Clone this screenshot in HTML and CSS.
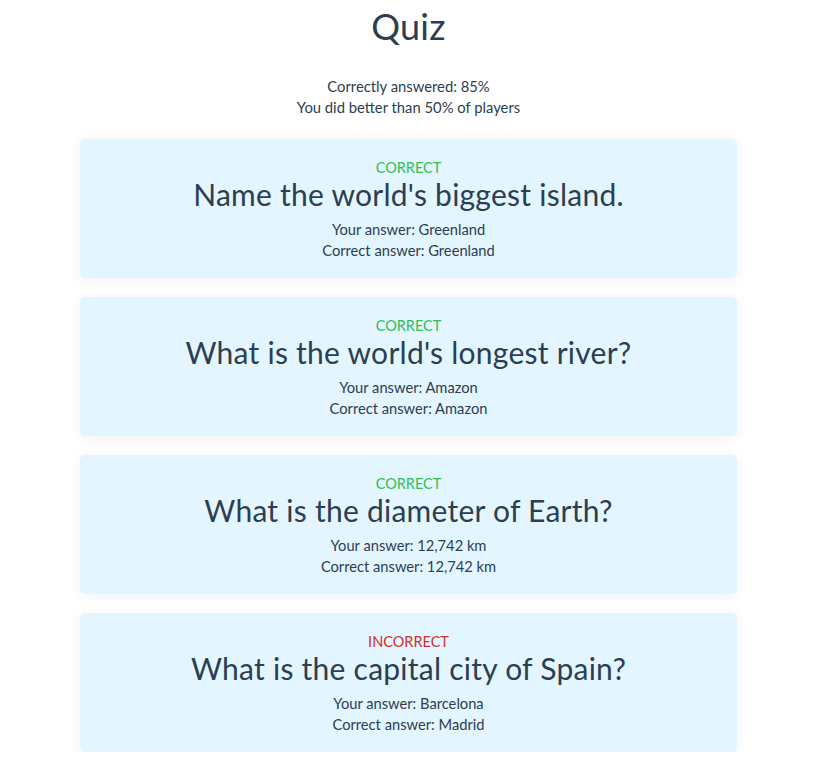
FILE: index.html
```html
<!DOCTYPE html>
<html lang="en">
<head>
<meta charset="utf-8">
<title>Quiz</title>
<link rel="stylesheet" href="styles.css">
</head>
<body>
<div class="app">
  <h1 class="title">Quiz</h1>
  <div class="summary">
    <p>Correctly answered: 85%</p>
    <p>You did better than 50% of players</p>
  </div>
  <div class="results">
    <div class="card">
      <div class="status correct">CORRECT</div>
      <h2 class="question">Name the world's biggest island.</h2>
      <p>Your answer: Greenland</p>
      <p>Correct answer: Greenland</p>
    </div>
    <div class="card">
      <div class="status correct">CORRECT</div>
      <h2 class="question">What is the world's longest river?</h2>
      <p>Your answer: Amazon</p>
      <p>Correct answer: Amazon</p>
    </div>
    <div class="card">
      <div class="status correct">CORRECT</div>
      <h2 class="question">What is the diameter of Earth?</h2>
      <p>Your answer: 12,742 km</p>
      <p>Correct answer: 12,742 km</p>
    </div>
    <div class="card">
      <div class="status incorrect">INCORRECT</div>
      <h2 class="question">What is the capital city of Spain?</h2>
      <p>Your answer: Barcelona</p>
      <p>Correct answer: Madrid</p>
    </div>
  </div>
</div>
</body>
</html>
```
FILE: styles.css
```css
html, body {
  margin: 0;
  padding: 0;
  background: #ffffff;
}
body {
  font-family: Lato, "Noto Sans", sans-serif;
  color: #2c3e50;
  -webkit-font-smoothing: antialiased;
}
.app {
  width: 817px;
  text-align: center;
}
.title {
  margin: 0;
  padding-top: 3px;
  font-size: 36px;
  font-weight: 400;
  line-height: 46px;
  letter-spacing: 0.3px;
}
.summary {
  margin-top: 27px;
  font-size: 14.8px;
  line-height: 21px;
}
.summary p, .card p {
  margin: 0;
}
.results {
  width: 657px;
  margin: 21px auto 0;
  display: flex;
  flex-direction: column;
  gap: 19px;
}
.card {
  background: #e3f5fe;
  border-radius: 5px;
  box-shadow: 0 2px 14px rgba(0, 0, 0, 0.06);
  padding: 19px 0 18px;
  font-size: 14.7px;
  line-height: 21px;
  height: 139px;
  box-sizing: border-box;
}
.status {
  font-size: 14.5px;
  line-height: 20px;
}
.status.correct { color: #2fbf57; }
.status.incorrect { color: #d1302a; }
.question {
  margin: -2px 0 7px;
  font-size: 30px;
  font-weight: 400;
  line-height: 36px;
  letter-spacing: 0.25px;
}
```
